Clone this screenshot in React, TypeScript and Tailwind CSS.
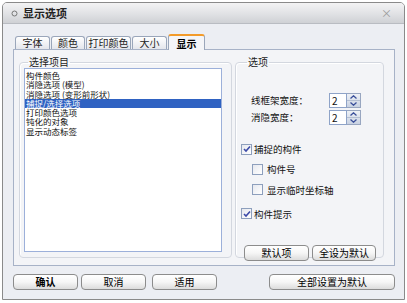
import React from 'react';

const FONT = { fontFamily: '"Noto Sans CJK SC", "Liberation Sans", sans-serif' };

const TABS = [
  { t: '字体', w: 'w-[35px]' },
  { t: '颜色', w: 'w-[34px]' },
  { t: '打印颜色', w: 'w-[45px]' },
  { t: '大小', w: 'w-[35px]' },
];

const ITEMS = [
  '构件颜色',
  '消隐选项 (模型)',
  '消隐选项 (变形前形状)',
  '捕捉/选择选项',
  '打印颜色选项',
  '钝化的对象',
  '显示动态标签',
];

const Button = ({ label, bold, className }: { label: string; bold?: boolean; className: string }) => (
  <button
    className={`h-[16px] rounded-[4px] border border-[#8c8c8c] bg-gradient-to-b from-white via-[#f6f6f6] to-[#dcdcdc] text-[10px] leading-none text-black ${bold ? 'font-bold' : ''} ${className}`}
  >
    {label}
  </button>
);

const Check = ({ checked }: { checked?: boolean }) => (
  <span className="w-[11px] h-[11px] border border-[#8d9fbd] bg-gradient-to-br from-[#e6e8ee] to-white flex items-center justify-center shrink-0">
    {checked && (
      <svg width="8" height="8" viewBox="0 0 8 8">
        <path d="M1 4 L3 6 L7 1.5" stroke="#3c4aa8" strokeWidth="1.6" fill="none" />
      </svg>
    )}
  </span>
);

const Spin = ({ value }: { value: string }) => (
  <div className="flex h-[15px]">
    <div className="w-[18px] border border-[#8ea3c8] bg-white text-[10px] leading-[13px] pl-[2px]">{value}</div>
    <div className="w-[14px] border border-[#98a6c0] border-l-0 flex flex-col bg-gradient-to-b from-[#eef1f6] to-[#c9d2e2]">
      <div className="flex-1 flex items-center justify-center border-b border-[#b4bfd2]">
        <svg width="7" height="4" viewBox="0 0 7 4">
          <path d="M0.5 3.5 L3.5 0.8 L6.5 3.5" stroke="#3a4f9a" strokeWidth="1.3" fill="none" />
        </svg>
      </div>
      <div className="flex-1 flex items-center justify-center">
        <svg width="7" height="4" viewBox="0 0 7 4">
          <path d="M0.5 0.5 L3.5 3.2 L6.5 0.5" stroke="#3a4f9a" strokeWidth="1.3" fill="none" />
        </svg>
      </div>
    </div>
  </div>
);

export default function App() {
  return (
    <div className="w-[407px] h-[303px] bg-white pt-[2px] pl-[2px] pr-[2px] pb-[3px]" style={FONT}>
      <div className="h-full flex flex-col border border-[#8a8a8a] rounded-t-[5px] bg-[#eceef3] overflow-hidden">
        {/* Title bar */}
        <div className="h-[21px] shrink-0 flex items-center bg-gradient-to-b from-[#f3f3f4] via-[#e2e3e6] to-[#cfd1d5] border-b border-[#b9bcc2]">
          <svg width="7" height="7" viewBox="0 0 7 7" className="ml-[8px]">
            <circle cx="3.5" cy="3.5" r="2.5" stroke="#777" strokeWidth="1" fill="none" />
          </svg>
          <span className="ml-[5px] text-[11px] font-bold text-[#222]">显示选项</span>
          <span className="ml-auto mr-[12px] text-[11px] text-[#9a9a9a]">×</span>
        </div>

        <div className="flex-1 flex flex-col pl-[10px] pr-[9px] pt-[9px]">
          {/* Tabs */}
          <div className="flex items-end h-[16px] pl-[2px]">
            {TABS.map(({ t, w }) => (
              <div
                key={t}
                className={`h-[13px] ${w} mr-[1px] border border-[#9aa6ba] border-b-0 rounded-t-[3px] bg-gradient-to-b from-white to-[#e4e6ec] text-[10px] leading-[12px] text-[#222] flex items-center justify-center`}
              >
                {t}
              </div>
            ))}
            <div className="h-[16px] w-[37px] -mb-[1px] z-10 border border-[#9aa6ba] border-b-0 border-t-2 border-t-[#f39b2a] rounded-t-[3px] bg-[#f4f5f8] text-[10px] font-bold flex items-center justify-center">
              显示
            </div>
          </div>

          {/* Panel */}
          <div className="h-[217px] flex gap-[3px] border border-[#a7b2c7] bg-[#f3f4f7] pl-[5px] pr-[10px] pt-[6px] pb-[7px]">
            <fieldset className="w-[213px] border border-[#d3d7df] rounded-[4px] pl-[4px] pr-[9px] pb-[5px] shadow-[inset_1px_1px_0_#fff]">
              <legend className="ml-[4px] px-[1px] text-[10px] leading-[12px] text-[#222]">选择项目</legend>
              <div className="h-full border border-[#9cb0da] bg-white pt-[2px] text-[8.5px] leading-[9.3px] text-[#111]">
                {ITEMS.map((it, i) => (
                  <div key={it} className={`pl-[1px] h-[9.3px] whitespace-nowrap ${i === 3 ? 'bg-[#2f62c2] text-white' : ''}`}>
                    {it}
                  </div>
                ))}
              </div>
            </fieldset>

            <fieldset className="flex-1 border border-[#d3d7df] rounded-[4px] pl-[9px] pr-[6px] shadow-[inset_1px_1px_0_#fff]">
              <legend className="ml-[2px] px-[1px] text-[10px] leading-[12px] text-[#222]">选项</legend>
              <div className="flex flex-col text-[9.5px] text-[#111]">
                <div className="flex items-center mt-[25px] pl-[6px]">
                  <span className="w-[78px]">线框架宽度：</span>
                  <Spin value="2" />
                </div>
                <div className="flex items-center mt-[2px] pl-[6px]">
                  <span className="w-[78px]">消隐宽度：</span>
                  <Spin value="2" />
                </div>
                <div className="flex items-center gap-[2px] mt-[17px] -ml-[4px]">
                  <Check checked />
                  <span>捕捉的构件</span>
                </div>
                <div className="flex items-center gap-[4px] mt-[6px] pl-[7px]">
                  <Check />
                  <span>构件号</span>
                </div>
                <div className="flex items-center gap-[4px] mt-[6px] pl-[7px]">
                  <Check />
                  <span>显示临时坐标轴</span>
                </div>
                <div className="flex items-center gap-[2px] mt-[10px] -ml-[4px]">
                  <Check checked />
                  <span>构件提示</span>
                </div>
                <div className="flex gap-[3px] mt-[24px] -ml-[1px]">
                  <Button label="默认项" className="w-[65px]" />
                  <Button label="全设为默认" className="w-[64px]" />
                </div>
              </div>
            </fieldset>
          </div>

          {/* Bottom buttons */}
          <div className="flex mt-[8px]">
            <Button label="确认" bold className="w-[65px]" />
            <Button label="取消" className="w-[65px] ml-[3px]" />
            <Button label="适用" className="w-[65px] ml-[6px]" />
            <Button label="全部设置为默认" className="w-[126px] ml-auto" />
          </div>
        </div>
      </div>
    </div>
  );
}
